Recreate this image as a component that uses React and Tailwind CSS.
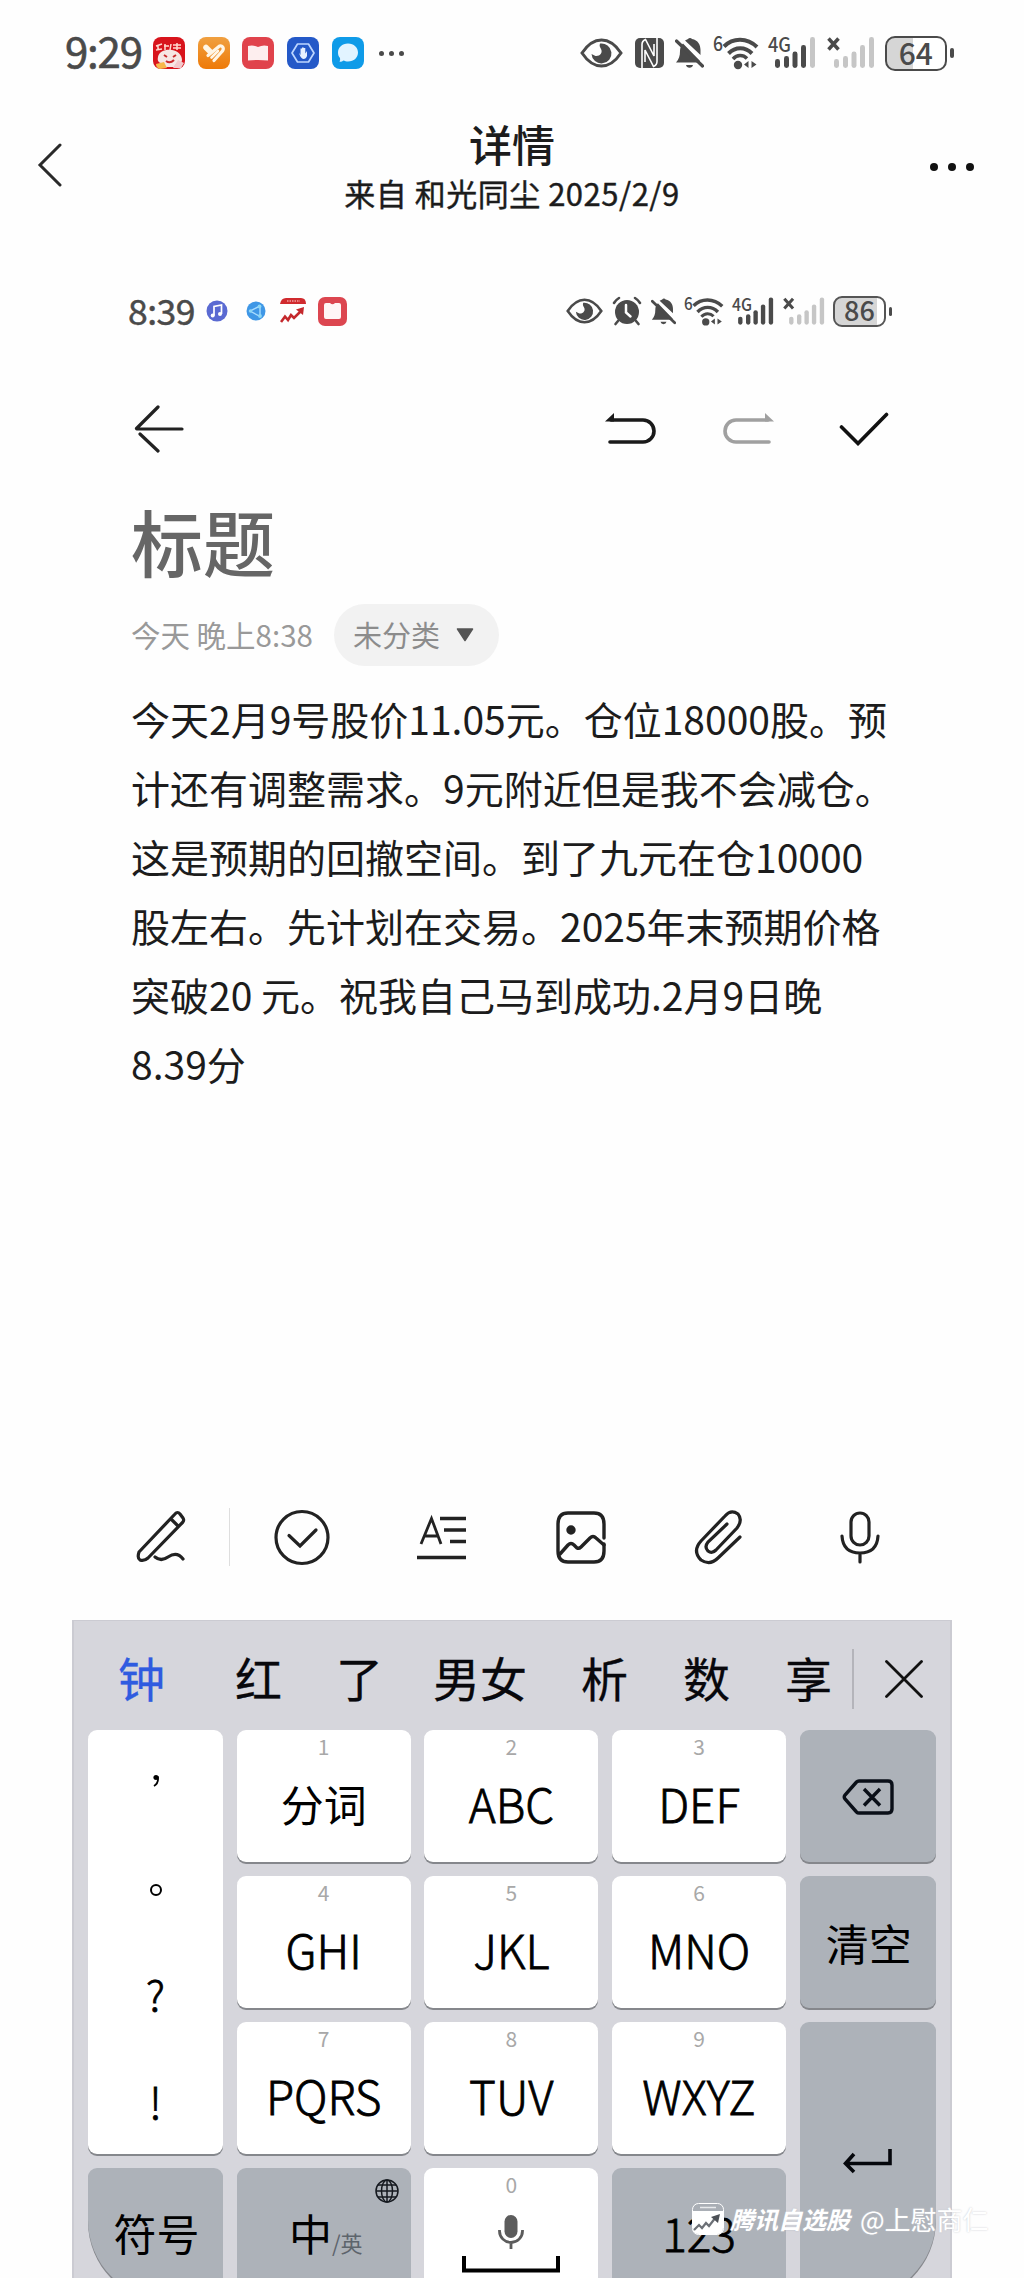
import React from 'react';

const FONT = 'font-["Noto_Sans_CJK_SC","Noto_Sans",sans-serif]';

const NOTE_LINES = [
  '今天2月9号股价11.05元。仓位18000股。预',
  '计还有调整需求。9元附近但是我不会减仓。',
  '这是预期的回撤空间。到了九元在仓10000',
  '股左右。先计划在交易。2025年末预期价格',
  '突破20 元。祝我自己马到成功.2月9日晚',
  '8.39分',
];

const CANDIDATES = [
  { text: '钟', width: 'w-[47px]', gap: 'ml-[44px]', color: 'text-[#2f5be0]' },
  { text: '红', width: 'w-[47px]', gap: 'ml-[70px]', color: 'text-[#08080c]' },
  { text: '了', width: 'w-[47px]', gap: 'ml-[54px]', color: 'text-[#08080c]' },
  { text: '男女', width: 'w-[94px]', gap: 'ml-[50px]', color: 'text-[#08080c]' },
  { text: '析', width: 'w-[47px]', gap: 'ml-[54px]', color: 'text-[#08080c]' },
  { text: '数', width: 'w-[47px]', gap: 'ml-[55px]', color: 'text-[#08080c]' },
  { text: '享', width: 'w-[47px]', gap: 'ml-[55px]', color: 'text-[#08080c]' },
];

/* ---------- status bar icons ---------- */

const EyeIcon = ({ className }) => (
  <svg viewBox="0 0 43 30" className={className}>
    <path d="M2 15C8 6 14 2 21.500 2S35 6 41 15C35 24 29 28 21.500 28S8 24 2 15Z" fill="none" stroke="#4a4a4a" strokeWidth="3" />
    <path d="M20 5.500A10 10 0 1 1 11.500 16L15.500 18C20 18.500 23 14.500 21 11C20.300 9.500 19 8 20 5.500Z" fill="#4a4a4a" />
  </svg>
);

const NfcIcon = ({ className }) => (
  <svg viewBox="0 0 29 30" className={className}>
    <rect width="29" height="30" rx="5" fill="#4a4a4a" />
    <path d="M7 30V6.500Q7 3 10.500 1.500L19 18V6M22 0V23.500Q22 27 18.500 28.500L10 12V24" fill="none" stroke="#fff" strokeWidth="1.600" />
  </svg>
);

const BellOffIcon = ({ className }) => (
  <svg viewBox="0 0 29 32" className={className}>
    <path d="M1 25.500C4 22 5 19 5 14C5 11 6 8.500 8 6.500L25 24V25.500ZM10 3.500L13 2A2.500 2.500 0 0 1 17 2C23 3 25.500 8 25.500 13V18ZM11 28H18A3.600 3.600 0 0 1 11 28Z" fill="#4a4a4a" />
    <path d="M1.500 4L27.500 29" stroke="#4a4a4a" strokeWidth="3.200" strokeLinecap="round" />
  </svg>
);

const AlarmIcon = ({ className }) => (
  <svg viewBox="0 0 30 30" className={className}>
    <circle cx="15" cy="16" r="12" fill="#4a4a4a" />
    <path d="M2 7A14 14 0 0 1 7 2M28 7A14 14 0 0 0 23 2M6 25L3.500 28M24 25L26.500 28" stroke="#4a4a4a" strokeWidth="2.600" strokeLinecap="round" fill="none" />
    <path d="M14 9V16.500L18.500 20.500" stroke="#fff" strokeWidth="2.500" fill="none" strokeLinecap="round" />
  </svg>
);

const WifiIcon = ({ className }) => (
  <svg viewBox="0 0 46 34" className={`overflow-visible ${className}`}>
    <text x="0" y="15" fontSize="20" fontWeight="500" fill="#4a4a4a" textLength="10" lengthAdjust="spacingAndGlyphs">6</text>
    <path d="M11 10.500C20 1.500 34 1.500 44 11M15.500 17.500C22.500 10.500 32 10.500 39 17.500" fill="none" stroke="#4a4a4a" strokeWidth="4" />
    <path d="M20 23C24 18.500 30 18.500 34 22.500" fill="none" stroke="#4a4a4a" strokeWidth="3.500" />
    <circle cx="25" cy="29" r="4.200" fill="#4a4a4a" />
    <path d="M31 28.500L35.500 25V32ZM43.500 28.500L38.500 25V32Z" fill="#4a4a4a" />
  </svg>
);

const BARS = [
  { x: 7, y: 23, h: 9 },
  { x: 16, y: 20, h: 12 },
  { x: 24.5, y: 15.5, h: 16.5 },
  { x: 33, y: 9, h: 23 },
  { x: 42, y: 1, h: 31 },
];

const SignalIcon = ({ className, active, label }) => (
  <svg viewBox="0 0 48 34" className={`overflow-visible ${className}`}>
    {label ? (
      <text x="0" y="16" fontSize="20" fontWeight="500" fill="#4a4a4a" textLength="23" lengthAdjust="spacingAndGlyphs">{label}</text>
    ) : (
      <path d="M1.500 2.500L11.500 13.500M11.500 2.500L1.500 13.500" stroke="#4a4a4a" strokeWidth="3.500" />
    )}
    {BARS.map((b, i) => (
      <rect key={b.x} x={b.x} y={b.y} width="5" height={b.h} rx="2.400" fill={i < active ? '#4a4a4a' : '#c6c6c6'} />
    ))}
  </svg>
);

/* ---------- app badges ---------- */

const GameBadge = () => (
  <svg viewBox="0 0 32 32" className="w-8 h-8">
    <rect width="32" height="32" rx="8" fill="#d8141c" />
    <path d="M3 9L9 7M5 8V13M3 13L9 12M12 7V13M11 9H16M18 7L17 13M20 8H28M24 6V13M20 11H28" stroke="#ffd9cf" strokeWidth="1.500" />
    <path d="M5 20C6 14 13 12 19 13C25 14 29 18 29 23C29 26 26 27 24 26L21 30H11L9 26C6 26 4 24 5 20Z" fill="#f6e6e4" />
    <path d="M11 18L14 20M23 18L20 20M13 24Q17 27 21 23" stroke="#c92a2c" strokeWidth="2" fill="none" />
    <path d="M3 27L11 25L14 31L7 32Q3 31 3 27Z" fill="#f7b84a" />
    <path d="M20 31L25 23L31 26L28 31Z" fill="#f3c9cc" />
  </svg>
);

const HeartBadge = () => (
  <svg viewBox="0 0 32 32" className="w-8 h-8">
    <defs>
      <linearGradient id="heart" x2="0" y2="1">
        <stop stopColor="#f0a040" />
        <stop offset="1" stopColor="#ee7a08" />
      </linearGradient>
    </defs>
    <rect width="32" height="32" rx="8" fill="url(#heart)" />
    <path d="M12 14.500L8 10.500" stroke="#fff6e6" strokeWidth="5.500" strokeLinecap="round" />
    <path d="M10 18.500L21.500 9C25 8 26.500 12 24 14.500L16 23.500" stroke="#fff6e6" strokeWidth="3.200" fill="none" strokeLinecap="round" strokeLinejoin="round" />
    <path d="M13.500 20.500L20 14" stroke="#fff6e6" strokeWidth="2.600" strokeLinecap="round" />
  </svg>
);

const BookBadge = () => (
  <svg viewBox="0 0 32 32" className="w-8 h-8">
    <rect width="32" height="32" rx="8" fill="#e0434c" />
    <path d="M6 9Q11 7.500 16 10Q21 7.500 26 9V23.500Q16 22.500 6 23.500Z" fill="#fdeeee" />
  </svg>
);

const NoteBadge = () => (
  <svg viewBox="0 0 29 29" className="ml-[11px] h-[29px] w-[29px]">
    <rect width="29" height="29" rx="7" fill="#dc4650" />
    <path d="M6 8Q6 6 8 6H12Q14.500 8.500 17 6H21Q23 6 23 8V20Q23 22 21 22H8Q6 22 6 20Z" fill="#fff6f6" />
  </svg>
);

const HandBadge = () => (
  <svg viewBox="0 0 32 32" className="w-8 h-8">
    <rect width="32" height="32" rx="8" fill="#2459c8" />
    <path d="M10.500 7H21.500L27 16L21.500 25H10.500L5 16Z" fill="none" stroke="#bcd6ff" strokeWidth="1.700" strokeLinejoin="round" />
    <path d="M12 15.500L13.500 18V11.500H15V16V10.500H16.700V16V11H18.300V16.500L20 14V19Q19 22 16.500 22Q13.500 22 12 15.500Z" fill="#e8f2ff" />
  </svg>
);

const ChatBadge = () => (
  <svg viewBox="0 0 32 32" className="w-8 h-8">
    <rect width="32" height="32" rx="8" fill="#0f9be8" />
    <path d="M16 6.500C22 6.500 26 10.500 26 15.500S22 24.500 16 24.500C14.500 24.500 12.500 24 11.500 23.500Q9 25.500 7.500 24.500Q8.500 23 8 21C6.500 19.500 6 17.500 6 15.500C6 10.500 10 6.500 16 6.500Z" fill="#e2f4ff" />
  </svg>
);

const MusicBadge = () => (
  <svg viewBox="0 0 22 22" className="w-[22px] h-[22px]">
    <circle cx="11" cy="11" r="10.500" fill="#5a6ad2" />
    <path d="M8 15.500V6.500L15.500 5V14" stroke="#fff" strokeWidth="1.700" fill="none" />
    <circle cx="6.700" cy="15.500" r="2" fill="#fff" />
    <circle cx="14" cy="14" r="2" fill="#fff" />
  </svg>
);

const ShareBadge = () => (
  <svg viewBox="0 0 20 20" className="w-5 h-5">
    <circle cx="10" cy="10" r="9.500" fill="#3f97e6" />
    <path d="M14 5L4 10L14 15.500M14 5V15" stroke="#a8dcff" strokeWidth="1.400" fill="none" />
    <circle cx="13.500" cy="5.500" r="1.900" fill="#8ed8f5" />
    <circle cx="14" cy="15" r="1.900" fill="#8ed8f5" />
    <circle cx="4.500" cy="10" r="1.700" fill="#8ed8f5" />
  </svg>
);

const StockBadge = () => (
  <svg viewBox="0 0 27 26" className="w-[27px] h-[26px]">
    <path d="M0 6Q1 0 6 0H21Q26 0 26 6Z" fill="#d02a2e" />
    <path d="M7 3H20" stroke="#f0a0a0" strokeWidth="1.300" strokeDasharray="1.500 1" />
    <path d="M1 24L5 18.500L8 22L11 17L14 20L22 12" stroke="#c4282c" strokeWidth="2.600" fill="none" />
    <path d="M16 11.500L24 9L23 17Z" fill="#c4282c" />
  </svg>
);

/* ---------- keyboard ---------- */

const Key = ({ hint, children, dark, className = '' }) => (
  <div className={`flex flex-col items-center rounded-[9px] shadow-[0_2px_0_#85878c] ${dark ? 'bg-[#adb2b9]' : 'bg-white'} ${className}`}>
    <span className="h-[30px] pt-px text-[21px] leading-[30px] text-[#a8a8a8]">{hint}</span>
    <div className="flex h-[86px] items-center justify-center whitespace-nowrap text-[46px] leading-[60px] text-black">{children}</div>
  </div>
);

const Latin = ({ children }) => (
  <span className="font-light [-webkit-text-stroke:0.8px_#000]">{children}</span>
);

const Keyboard = () => (
  <section className="ml-[72px] w-[880px] h-[658px] shrink-0 overflow-hidden border-x-2 border-t border-[#cbcbd2] bg-[#d6d6dc]">
    <div className="flex h-[109px] items-center pt-1.5">
      {CANDIDATES.map(c => (
        <span key={c.text} className={`shrink-0 whitespace-nowrap text-[47px] leading-[60px] relative -top-0.5 [-webkit-text-stroke:0.3px_currentColor] ${c.width} ${c.gap} ${c.color}`}>{c.text}</span>
      ))}
      <div className="ml-[20px] h-[60px] w-0.5 shrink-0 bg-[#b4b4ba]" />
      <svg viewBox="0 0 38 38" className="ml-[31px] h-[38px] w-[38px] shrink-0">
        <path d="M1.500 1.500L36.500 36.500M36.500 1.500L1.500 36.500" stroke="#111" strokeWidth="2.800" strokeLinecap="round" />
      </svg>
    </div>

    <div className="ml-3.5 grid w-[848px] grid-cols-[135px_174px_174px_174px_136px] gap-x-[13.7px] grid-rows-[132px_132px_132px_132px] gap-y-3.5">
      <div className="row-span-3 flex flex-col items-center rounded-[9px] bg-white pt-[4px] text-[42px] text-black shadow-[0_2px_0_#85878c]">
        <svg viewBox="0 0 20 108" className="h-[108px] w-5">
          <circle cx="10" cy="43.500" r="2.600" />
          <path d="M11.800 42.500Q13 49 8 52" fill="none" stroke="#000" strokeWidth="1.800" />
        </svg>
        <div className="flex h-[95px] items-center">
          <span className="block h-3 w-3 rounded-full border-[2.5px] border-black" />
        </div>
        <span className="flex h-[110px] items-center font-light [-webkit-text-stroke:0.8px_#000]">?</span>
        <span className="flex h-[106px] items-center font-light [-webkit-text-stroke:0.8px_#000]">!</span>
      </div>
      <Key hint="1"><span className="text-[43px]">分词</span></Key>
      <Key hint="2"><Latin>ABC</Latin></Key>
      <Key hint="3"><Latin>DEF</Latin></Key>
      <Key dark>
        <svg viewBox="0 0 52 36" className="relative -top-1.5 h-9 w-[52px]">
          <path d="M17 2H46Q50 2 50 6V30Q50 34 46 34H17Q15.500 34 14.500 33L3 20Q1.500 18 3 16L14.500 3Q15.500 2 17 2Z" fill="none" stroke="#0a0f18" strokeWidth="3.400" />
          <path d="M22 10L38 26.500M38 10L22 26.500" stroke="#0a0f18" strokeWidth="3.400" />
        </svg>
      </Key>

      <Key hint="4"><Latin>GHI</Latin></Key>
      <Key hint="5"><Latin>JKL</Latin></Key>
      <Key hint="6"><Latin>MNO</Latin></Key>
      <Key dark><span className="relative -top-[7px] left-px text-[43px]">清空</span></Key>

      <Key hint="7"><Latin>PQRS</Latin></Key>
      <Key hint="8"><Latin>TUV</Latin></Key>
      <Key hint="9"><Latin>WXYZ</Latin></Key>
      <div className="row-span-2 rounded-[9px] rounded-br-[82px] bg-[#adb2b9] pt-[126px] shadow-[0_2px_0_#85878c]">
        <svg viewBox="0 0 50 26" className="mx-auto h-[26px] w-[50px]">
          <path d="M47 1V15.500H3M11 6L2.500 15.500L11 24" fill="none" stroke="#05070c" strokeWidth="3.600" />
        </svg>
      </div>

      <Key dark className="rounded-bl-[80px]"><span className="relative -top-[9px] left-px text-[43px]">符号</span></Key>
      <Key dark className="relative">
        <span className="ml-1 text-[43px] relative -top-[9px]">中</span>
        <span className="relative top-px text-[22px] text-[#5d646c]">/英</span>
        <svg viewBox="0 0 24 24" className="absolute right-3 top-[11px] h-6 w-6" fill="none" stroke="#15191f" strokeWidth="1.500">
          <circle cx="12" cy="12" r="11" />
          <ellipse cx="12" cy="12" rx="5.500" ry="11" />
          <path d="M12 1V23M1 12H23M3 6H21M3 18H21" />
        </svg>
      </Key>
      <Key hint="0">
        <svg viewBox="0 0 100 62" className="relative top-1 h-[62px] w-[100px]">
          <rect x="43.500" y="1" width="13" height="23" rx="6.500" fill="#5c5c5c" />
          <path d="M38.500 16V17A11.500 11.500 0 0 0 61.500 17V16M50 28V35" fill="none" stroke="#5c5c5c" strokeWidth="2.800" />
          <path d="M3 42V56.500H97V42" fill="none" stroke="#000" strokeWidth="4" />
        </svg>
      </Key>
      <Key dark><span className="relative -top-[9px]"><Latin>123</Latin></span></Key>
    </div>
  </section>
);

const Watermark = () => (
  <div className="absolute left-[692px] top-[2201px] flex h-9 items-center whitespace-nowrap text-white">
    <svg viewBox="0 0 32 32" className="h-8 w-8">
      <rect x="0.500" y="0.500" width="31" height="31" rx="6" fill="#a9aeb5" stroke="#fff" />
      <path d="M1 8H31V25Q31 31 25 31H7Q1 31 1 25Z" fill="#fff" />
      <path d="M8 4.500H24" stroke="#e8eaec" strokeWidth="1.500" />
      <path d="M2 27L7 22L10 25L14 20L17 23L24 14" fill="none" stroke="#6c7076" strokeWidth="2.200" />
      <path d="M19 14L28 11L26 20Z" fill="#4c5056" />
    </svg>
    <span className="ml-1.5 text-[24px] font-bold italic leading-9 [text-shadow:0_0_2px_#b9bdc4]">腾讯自选股</span>
    <span className="ml-2.5 text-[26px] leading-9 [text-shadow:0_0_2px_#c4c7cd]">@上慰商仁</span>
  </div>
);

export default function App() {
  return (
    <div className={`relative flex h-[2278px] w-[1024px] flex-col overflow-hidden bg-[#fefefe] text-[#1c1c1c] ${FONT}`}>
      {/* phone status bar */}
      <div className="flex h-[104px] shrink-0 items-center pl-[65px] pt-0.5">
        <span className="w-[88px] text-[42px] leading-[50px] tracking-[-1.2px] text-[#4a4a4a] relative -top-[3px] [-webkit-text-stroke:0.6px_#4a4a4a]">9:29</span>
        <div className="flex gap-[12.7px]">
          <GameBadge />
          <HeartBadge />
          <BookBadge />
          <HandBadge />
          <ChatBadge />
        </div>
        <div className="ml-[15px] flex gap-[5px]">
          {[0, 1, 2].map(i => <span key={i} className="h-[5px] w-[5px] rounded-full bg-[#4a4a4a]" />)}
        </div>
        <EyeIcon className="ml-[176px] h-[30px] w-[43px]" />
        <NfcIcon className="ml-3 h-[30px] w-[29px]" />
        <BellOffIcon className="ml-[11px] h-8 w-[29px]" />
        <WifiIcon className="ml-[9px] h-[34px] w-[46px]" />
        <SignalIcon className="ml-[9px] h-[34px] w-12" active={4} label="4G" />
        <SignalIcon className="ml-[11px] h-[34px] w-12" active={0} />
        <div className="ml-[10px] flex items-center gap-[3px]">
          <div className="flex h-[35px] w-[62px] items-center justify-center rounded-[10px] border-[2.5px] border-[#4a4a4a] bg-[linear-gradient(90deg,#d6d6d6_45%,#fff_45%)] pb-[3px] text-[30px] font-medium leading-none text-[#4a4a4a]">64</div>
          <div className="h-[10px] w-1 rounded-sm bg-[#4a4a4a]" />
        </div>
      </div>

      {/* detail header */}
      <header className="flex h-[126px] shrink-0 items-start justify-between pl-[37px] pr-[50px]">
        <svg viewBox="0 0 26 44" className="mt-[39px] h-11 w-[26px]">
          <path d="M23 2L3 22L23 42" fill="none" stroke="#2a2a2a" strokeWidth="3" strokeLinecap="round" />
        </svg>
        <div className="ml-[31px] mt-[11px] flex flex-col items-center">
          <h1 className="text-[43px] font-medium leading-[56px]">详情</h1>
          <p className="text-[31px] leading-[44px] tracking-[0.5px] [-webkit-text-stroke:0.4px_currentColor]">来自 和光同尘 2025/2/9</p>
        </div>
        <div className="mt-[59px] flex gap-[10px]">
          {[0, 1, 2].map(i => <span key={i} className="h-2 w-2 rounded-full bg-[#111]" />)}
        </div>
      </header>

      {/* embedded note capture */}
      <div className="mt-[50px] flex h-[62px] shrink-0 items-center pl-[128px]">
        <span className="w-[78px] text-[35.5px] leading-[50px] tracking-[-0.5px] text-[#4a4a4a] relative -top-px [-webkit-text-stroke:0.5px_#4a4a4a]">8:39</span>
        <MusicBadge />
        <span className="ml-[18px]"><ShareBadge /></span>
        <span className="ml-[14px]"><StockBadge /></span>
        <NoteBadge />
        <EyeIcon className="ml-[219px] h-[26px] w-[37px]" />
        <AlarmIcon className="ml-[9px] h-[30px] w-[30px]" />
        <BellOffIcon className="ml-[9px] h-[29px] w-[25px]" />
        <WifiIcon className="ml-[8px] h-[31px] w-[40px]" />
        <SignalIcon className="ml-[8px] h-[31px] w-[42px]" active={5} label="4G" />
        <SignalIcon className="ml-[9px] h-[31px] w-[42px]" active={0} />
        <div className="ml-[8px] flex items-center gap-[3px]">
          <div className="flex h-[31px] w-[53px] items-center justify-center rounded-[9px] border-2 border-[#555] bg-[linear-gradient(90deg,#d6d6d6_86%,#fff_86%)] pb-[3px] text-[27px] font-medium leading-none text-[#4a4a4a]">86</div>
          <div className="h-[9px] w-[3px] rounded-sm bg-[#4a4a4a]" />
        </div>
      </div>

      <div className="mt-[56px] flex h-[62px] shrink-0 items-center pl-[134px]">
        <svg viewBox="0 0 50 48" className="h-12 w-[50px]">
          <path d="M48 24H3M24 2L2.500 23.500M6 29L24 46" fill="none" stroke="#222" strokeWidth="3.200" strokeLinecap="round" />
        </svg>
        <svg viewBox="0 0 52 34" className="ml-[421px] h-[34px] w-[52px]">
          <path d="M6 8H38A11 11 0 0 1 38 30H5" fill="none" stroke="#1a1a1a" strokeWidth="3.600" strokeLinecap="round" />
          <path d="M0 9.500L9 1V9.500Z" fill="#1a1a1a" />
        </svg>
        <svg viewBox="0 0 52 34" className="ml-[65px] h-[34px] w-[52px] -scale-x-100">
          <path d="M6 8H38A11 11 0 0 1 38 30H5" fill="none" stroke="#a0a0a0" strokeWidth="3.600" strokeLinecap="round" />
          <path d="M0 9.500L9 1V9.500Z" fill="#a0a0a0" />
        </svg>
        <svg viewBox="0 0 50 34" className="ml-[65px] h-[34px] w-[50px]">
          <path d="M2.500 15L19 31.500L47.500 2.500" fill="none" stroke="#111" strokeWidth="3.600" strokeLinecap="round" />
        </svg>
      </div>

      <main className="h-[1022px] shrink-0 pl-[131px]">
        <h2 className="pt-[32px] text-[72px] font-medium leading-[96px] text-[#666]">标题</h2>
        <div className="mt-[16px] flex h-[62px] items-center">
          <span className="relative -top-px w-[203px] whitespace-nowrap text-[29.5px] leading-[40px] text-[#999]">今天 晚上8:38</span>
          <div className="flex h-[62px] w-[165px] items-center rounded-full bg-[#f2f2f2] pl-[19px]">
            <span className="relative -top-px text-[29px] leading-[40px] text-[#8c8c8c]">未分类</span>
            <svg viewBox="0 0 18 14" className="ml-4 h-3.5 w-[18px]">
              <path d="M1.500 1H16.500L9 12.500Z" fill="#555" stroke="#555" strokeWidth="1.500" strokeLinejoin="round" />
            </svg>
          </div>
        </div>
        <div className="mt-[18px] whitespace-pre text-[39px] leading-[69px] text-[#1c1c1c]">
          {NOTE_LINES.map(line => <p key={line}>{line}</p>)}
        </div>
      </main>

      {/* note tools */}
      <div className="flex h-[138px] shrink-0 items-start pl-[135px] pt-[26px]">
        <svg viewBox="0 0 52 56" className="h-14 w-[52px]" fill="none" stroke="#222" strokeWidth="3.200" strokeLinecap="round" strokeLinejoin="round">
          <path d="M4 44L40 6Q42.500 3 45 6L48 10Q49.500 12.500 47.500 14.500L13 50Q9 53.500 5 52Q2 50 4 44ZM36 11L43 18" />
          <path d="M20 49Q26 54 33 49Q42 43 48 51" />
        </svg>
        <div className="ml-[42px] h-[58px] w-px bg-[#dedede]" />
        <svg viewBox="0 0 56 58" className="ml-[44px] h-[58px] w-14" fill="none" stroke="#222" strokeWidth="3.200" strokeLinecap="round">
          <circle cx="28" cy="29.500" r="26" />
          <path d="M15 27.500L26 38L42 22" />
        </svg>
        <svg viewBox="0 0 52 58" className="ml-[86px] h-[58px] w-[52px]" fill="none" stroke="#222" strokeWidth="3.400">
          <path d="M5 36L15.500 10.500L25 36M9 28H22" strokeWidth="2.800" />
          <path d="M24 10.500H50M28 22H50M34 33.500H50M1 49.500H50" />
        </svg>
        <svg viewBox="0 0 52 58" className="ml-[87px] h-[58px] w-[52px]" fill="none" stroke="#222" strokeWidth="3.400" strokeLinecap="round" strokeLinejoin="round">
          <path d="M49 36V43Q49 54 39 54H13Q3 54 3 43V16Q3 5 13 5H39Q49 5 49 16V30" />
          <path d="M5 46L13 37Q16 34 19 37L22 40Q24 41 26 39L35 30Q38 27 41 30L49 37" />
          <circle cx="16" cy="22" r="3" fill="#222" />
        </svg>
        <svg viewBox="0 0 52 58" className="ml-[86px] h-[58px] w-[52px]" fill="none" stroke="#222" strokeWidth="3.200" strokeLinecap="round">
          <path d="M47 29L25 50Q17 58 8 52Q-1 43 8 33L32 8Q38 1 45 6Q50 12 44 20L23 42Q19 46 15 43Q11 39 15 34L34 16" />
        </svg>
        <svg viewBox="0 0 40 58" className="ml-[95px] h-[58px] w-10" fill="none" stroke="#222" strokeWidth="3.200" strokeLinecap="round">
          <rect x="11" y="5" width="18" height="32" rx="9" />
          <path d="M2 28Q3 45 20 45Q37 45 38 28M20 45V54" />
        </svg>
      </div>

      <Keyboard />
      <Watermark />
    </div>
  );
}
